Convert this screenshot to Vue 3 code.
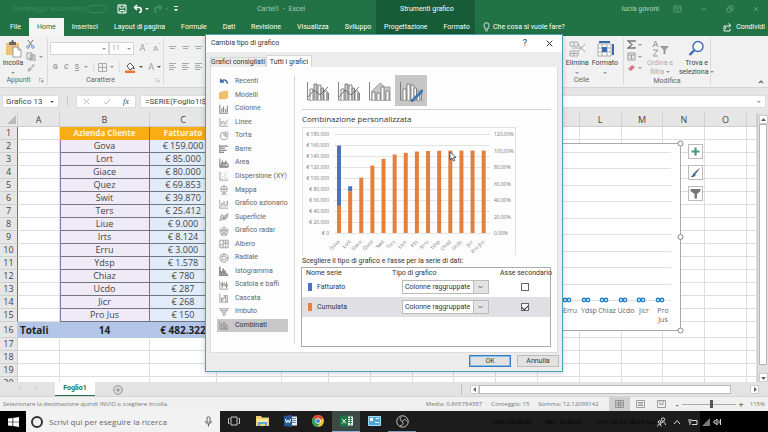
<script setup>
import { ref } from 'vue'

const tabs = ['File', 'Home', 'Inserisci', 'Layout di pagina', 'Formule', 'Dati', 'Revisione', 'Visualizza', 'Sviluppo']
const letters = ['A', 'B', 'C', '', '', '', '', '', '', '', '', 'L', 'M', 'N', 'O', '']
const clients = [
  ['Gova', '159.000', 159000], ['Lort', '85.000', 85000], ['Giace', '80.000', 80000], ['Quez', '69.853', 69853],
  ['Swit', '39.870', 39870], ['Ters', '25.412', 25412], ['Liue', '9.000', 9000], ['Irts', '8.124', 8124],
  ['Erru', '3.000', 3000], ['Ydsp', '1.578', 1578], ['Chiaz', '780', 780], ['Ucdo', '287', 287],
  ['Jicr', '268', 268], ['Pro Jus', '150', 150]
]
const total = clients.reduce((s, c) => s + c[2], 0)
let run = 0
const bars = clients.map(([name, , value], i) => {
  run += value
  const orange = (run / total / 1.2) * 99
  const full = (value / 180000) * 99
  return { name, x: 36 + i * 11.13, full, blue: Math.max(0, full - orange), orange }
})
const leftAxis = ['180.000', '160.000', '140.000', '120.000', '100.000', '80.000', '60.000', '40.000', '20.000', '0']
const rightAxis = ['120,00%', '100,00%', '80,00%', '60,00%', '40,00%', '20,00%', '0,00%']

const kinds = [
  { name: 'Recenti', c: '#3b6cb0', w: 1.8, d: 'M2 2v4h4M2.500 5.500C5 2.500 10 3 10 8' },
  { name: 'Modelli', folder: true },
  { name: 'Colonne', d: 'M1 1v10h10M3.500 10V5M5.500 10V3M8 10V6M10 10V2', w: 1.3 },
  { name: 'Linee', d: 'M1 1v10h10M2 9l3-4 2 2 4-4M2 5l4 4 4-2' },
  { name: 'Torta', d: 'M6 1.500a4.500 4.500 0 1 0 4.500 4.500H6zM7.500 1v3.500H11A4 4 0 0 0 7.500 1z' },
  { name: 'Barre', d: 'M1 1v10M2 2.500h9M2 5h5M2 7.500h7M2 10h4', w: 1.5 },
  { name: 'Area', d: 'M1 1v10h10M2 10l2-6 2 4 2-4 3 4v2zM3.500 9l1-3M8 9V6', w: 1.3 },
  { name: 'Dispersione (XY)', d: 'M1 1v10h10M3 3h1M6 4h1M9 2h1M4 7h1M8 6h1M3 9h1M6 8h1M9 9h1' },
  { name: 'Mappa', d: 'M6 1a4 4 0 1 0 .1 8zM6 1a4 4 0 0 1 0 8M2 5h8M6 9v2M3 11h6' },
  { name: 'Grafico azionario', d: 'M1 1v10h10M3.500 9V5M6 9V3M8 9V6M10 9V2M2.500 6h2M5 4h2M9 5h2' },
  { name: 'Superficie', d: 'M1 10l2-7 3 2 5-3-2 6-3 1zM2 7l4 1 4-3M3 5l3 2 4-4M6 5v4' },
  { name: 'Grafico radar', d: 'M6 1l5 4-2 6H3L1 5zM6 3l1 3 3-1-3 2 1 3-2-2-2 2 1-3-3-2 3 1z' },
  { name: 'Albero', d: 'M1 1.500h10v9H1zM5 1.500v9M8 1.500v9M5 5h6M1 7h4' },
  { name: 'Radiale', d: 'M6 1a5 5 0 1 0 .1 10A5 5 0 0 0 6 1zM6 3.500a2.500 2.500 0 1 0 .1 5A2.500 2.500 0 0 0 6 3.500zM6 1v2.500M11 6H8.500M2.500 9.500l2-2M2 3l2 1.500' },
  { name: 'Istogramma', d: 'M1 1v10h10M3 10V6M5 10V3M7 10V5M9 10V8', w: 1.9 },
  { name: 'Scatola e baffi', d: 'M1 1v10h10M4 2v8M3 4h2v3H3zM9 2v8M8 5h2v3H8zM6.500 3v4' },
  { name: 'Cascata', d: 'M1 1v10h10M3 10V6h1.500v4M4.500 6H7V3H5.500M8 3h2v7H8z' },
  { name: 'Imbuto', d: 'M1 2h10l-1 2H2zM3 4l1 2h4l1-2M4.500 6l.5 4h2l.5-4' },
  { name: 'Combinati', d: 'M1 1v10h10M3 11V5h2v6M5 5V3h2v8M8 11V6h2v5' }
]
const series = ref([
  { name: 'Fatturato', color: '#4a72bd', secondary: false, type: 'Colonne raggruppate' },
  { name: 'Cumulata', color: '#ea8040', secondary: true, type: 'Colonne raggruppate' }
])
const query = ref('')
const nameBox = ref('Grafico 13')
const formula = ref('=SERIE(Foglio1!$C')
const markers = [['Erru', 18], ['Ydsp', 37], ['Chiaz', 55], ['Ucdo', 74], ['Jicr', 92], ['Pro', 111]]
const zoom = ref(55)
</script>

<template>
  <div class="app">
    <header class="head">
      <div class="title-left">
        <span class="autosave">Salvataggio automatico</span><i class="toggle"></i>
        <button class="ic" aria-label="Salva"><svg width="10" height="10" viewBox="0 0 10 10" fill="none" stroke="#fff"><path d="M1 1h8v8H1zM3 1v3h4V1M3 9V6.500h4V9" /></svg></button>
        <button class="ic undo" aria-label="Annulla azione"><svg width="16" height="10" viewBox="0 0 16 10" fill="none" stroke="#fff"><path stroke-width="1.500" d="M4 1L1.500 3.500 4 6M2 3.500h4c3 0 3 5 0 5" /><path fill="#fff" stroke="none" d="M12 4h4l-2 2z" /></svg></button>
        <button class="ic redo" aria-label="Ripeti"><svg width="16" height="10" viewBox="0 0 16 10" fill="none" stroke="#3f9264"><path stroke-width="1.500" d="M6 1l2.500 2.500L6 6M8 3.500H4c-3 0-3 5 0 5" /><path fill="#3f9264" stroke="none" d="M12 4h3l-1.500 2z" /></svg></button>
        <svg class="qat" width="6" height="8" viewBox="0 0 6 8" fill="#fff"><path d="M1 1h4v1H1zM1 4h4L3 6.500z" /></svg>
        <span class="doc">Cartel1&nbsp; - &nbsp;Excel</span>
      </div>
      <div class="context">
        <div class="ctx-title">Strumenti grafico</div>
        <nav class="tabs"><button>Progettazione</button><button>Formato</button></nav>
      </div>
      <div class="title-right">
        <span class="user">lucia govoni</span>
        <svg width="9" height="8" viewBox="0 0 9 8" class="w1"><path d="M1 1h7v6H1zM1 3h7M4.500 6V4" /></svg>
        <svg width="8" height="8" viewBox="0 0 8 8"><path d="M1 4h5" /></svg>
        <svg width="8" height="8" viewBox="0 0 8 8"><path d="M1 3h4v4H1zM3 3V1h4v4H5" /></svg>
        <svg width="8" height="8" viewBox="0 0 8 8"><path d="M2 2l4 4M6 2L2 6" /></svg>
      </div>
      <nav class="tabs main-tabs">
        <button v-for="t in tabs" :key="t" :class="{ on: t === 'Home' }">{{ t }}</button>
      </nav>
      <div class="tell">
        <svg width="7" height="10" viewBox="0 0 7 10" fill="none" stroke="#fff" stroke-width=".8"><path d="M2 7C2 5 1 5 1 3.200a2.500 2.500 0 0 1 5 0C6 5 5 5 5 7zM2.200 8.800h2.600" /></svg>
        <span>Che cosa si vuole fare?</span>
        <button class="share"><svg width="9" height="9" viewBox="0 0 9 9" fill="none" stroke="#fff" stroke-width=".9"><path d="M3 3H1v5h6V6M2.500 6c0-3 2-3.500 4-3.500M5.500.5l2.500 2-2.500 2" /></svg>Condividi</button>
      </div>
    </header>

    <section class="ribbon">
      <div class="group clip">
        <div class="body">
          <button class="big">
            <svg width="17" height="18" viewBox="0 0 17 18"><path fill="#eec27a" d="M1 3h13v12H1z" /><path fill="#666" d="M4 2h2l1-2h1l1 2h2v3H4z" /><path fill="#fff" stroke="#888" stroke-width=".8" d="M8 7h5l3 3v7H8z" /><path d="M13 7v3h3" fill="none" stroke="#888" stroke-width=".8" /></svg>
            <span>Incolla</span><i class="car"></i>
          </button>
          <div class="mini">
            <svg width="10" height="9" viewBox="0 0 10 9" fill="none" stroke="#777"><path d="M2 0l4 6M7 0L3 6" /><circle cx="2" cy="7" r="1.300" stroke="#7b9ac4" /><circle cx="7" cy="7" r="1.300" stroke="#7b9ac4" /></svg>
            <span class="row"><svg width="10" height="9" viewBox="0 0 10 9" fill="#f4f4f4" stroke="#999"><path d="M1 1h5v6H1zM4 3h5v6H4zM5 5h3M5 7h3" /></svg><i class="car"></i></span>
            <svg width="10" height="8" viewBox="0 0 10 8" fill="#b5b5b5"><path d="M7 0l2 1-3 3-1-1zM4 3l2 2-3 3-2-2z" /></svg>
          </div>
        </div>
        <div class="cap">Appunti<svg width="5" height="5" viewBox="0 0 5 5" class="launch"><path d="M0 4V0h4M2 2l2 2M4 2v2H2" /></svg></div>
      </div>
      <div class="group font">
        <div class="body col">
          <div class="row fonts"><span class="box fam"><i class="car"></i></span><span class="box size">11<i class="car"></i></span><span class="gl">A<sup>ˆ</sup></span><span class="gl sm">A<sup>ˇ</sup></span></div>
          <div class="row styles"><b>G</b><b><em>C</em></b><b><u>S</u></b><i class="car"></i><i class="bar"></i>
            <svg width="9" height="9" viewBox="0 0 9 9" fill="none" stroke="#aaa"><path d="M.5.5h8v8h-8zM4.500.5v8M.5 4.500h8" /></svg><i class="car"></i><i class="bar"></i>
            <svg width="11" height="11" viewBox="0 0 11 11"><path fill="#fff" stroke="#555" d="M2 4l3-3 4 4-4 3z" /><path fill="#555" d="M8 4l2 3H8z" /><path fill="#e8792f" d="M0 8.500h10V11H0z" /></svg><i class="car dk"></i><span class="gl fc">A</span><i class="car dk"></i></div>
        </div>
        <div class="cap">Carattere<svg width="5" height="5" viewBox="0 0 5 5" class="launch dim"><path d="M0 4V0h4M2 2l2 2M4 2v2H2" /></svg></div>
      </div>
      <div class="align">
        <svg v-for="n in 6" :key="n" width="9" height="8" viewBox="0 0 9 8" stroke="#aaa" fill="none"><path :d="n < 4 ? 'M1 2.500h7M2 4.500h5' : 'M1 1.500h7M1 3.500h5M1 5.500h7M1 7.500h5'" /></svg>
      </div>
      <div class="group cells">
        <div class="body">
          <button class="big"><svg width="17" height="18" viewBox="0 0 17 18" fill="none" stroke="#aaa"><path d="M1 2h8v4H1zM5 2v4M3 8h10M1 11h8v5H1zM5 11v5M1 13.500h8M9 4l7 8M16 4l-7 8" /></svg><span>Elimina</span><i class="car"></i></button>
          <button class="big"><svg width="18" height="18" viewBox="0 0 18 18" fill="none" stroke="#aaa"><path fill="#fff" d="M2 4h13v12H2zM2 8h13M2 12h13M6 4v12M11 4v12" /><path fill="#386ab4" stroke="none" d="M6 7h5v5H6zM3 1h11v2H3zM16 4h2v11h-2z" /></svg><span>Formato</span><i class="car"></i></button>
        </div>
        <div class="cap">Celle</div>
      </div>
      <div class="group edit">
        <div class="body">
          <div class="mini m2">
            <span class="row"><svg width="9" height="9" viewBox="0 0 9 9" fill="none" stroke="#777" stroke-width="1.300"><path d="M8 2V1H1l4 3.500L1 8h7V7" /></svg><i class="car"></i></span>
            <span class="row"><svg width="9" height="9" viewBox="0 0 9 9" fill="none" stroke="#999"><path d="M1 1h7v7H1zM1 3h7M4.500 3v4M3 5.500L4.500 7 6 5.500" /></svg><i class="car"></i></span>
            <span class="row"><svg width="9" height="8" viewBox="0 0 9 8" fill="#e2748a"><path d="M5 1l3 2-4 4-3-2z" /></svg><i class="car"></i></span>
          </div>
          <button class="big dimt"><svg width="18" height="17" viewBox="0 0 18 17" fill="none" stroke="#999"><path d="M2 7l2.500-6L7 7M3 5h3M2 10h5l-5 6h5" /><path fill="#999" stroke="none" d="M9 6h9l-3.500 4v4h-2v-4z" /></svg><span>Ordina e</span><span>filtra <i class="car in"></i></span></button>
          <button class="big"><svg width="17" height="17" viewBox="0 0 17 17" fill="none" stroke="#3b6cb0"><circle cx="10" cy="6.500" r="5" stroke-width="1.400" fill="#fafcff" /><path stroke-width="2.400" d="M6 10.500L1.500 15" /></svg><span>Trova e</span><span>seleziona <i class="car in"></i></span></button>
        </div>
        <div class="cap">Modifica</div>
      </div>
      <div class="collapse"><svg width="6" height="4" viewBox="0 0 6 4" fill="none" stroke="#666" stroke-width="1.200"><path d="M1 3l2-2 2 2" /></svg></div>
    </section>

    <section class="fbar">
      <label class="namebox"><input v-model="nameBox" aria-label="Casella nome" /><i class="car dk"></i></label>
      <i class="dots"></i>
      <div class="fx"><svg width="7" height="7" viewBox="0 0 7 7"><path d="M1 1l5 5M6 1L1 6" /></svg><svg width="8" height="7" viewBox="0 0 8 7"><path d="M1 4l2 2 4-5" /></svg><em>fx</em></div>
      <label class="formula"><input v-model="formula" aria-label="Barra della formula" /><i class="car"></i></label>
    </section>

    <main class="work">
      <div class="sheet">
        <table class="grid">
          <colgroup><col class="c0" /><col class="cA" /><col class="cB" /><col class="cC" /><col class="cD" /><col class="cE" /><col v-for="n in 10" :key="n" /><col class="cZ" /></colgroup>
          <thead><tr><th class="corner"><svg width="9" height="9" viewBox="0 0 9 9"><path fill="#bbb" d="M9 0v9H0z" /></svg></th><th v-for="(l, i) in letters" :key="i">{{ l }}</th></tr></thead>
          <tbody>
            <tr class="titles"><th class="sel">1</th><td></td><td class="hd">Azienda Cliente</td><td class="hd">Fatturato</td><td v-for="n in 13" :key="n"></td></tr>
            <tr v-for="(c, i) in clients" :key="c[0]"><th class="sel">{{ i + 2 }}</th><td></td><td class="b">{{ c[0] }}</td><td class="c">€ {{ c[1] }}</td><td v-for="n in 13" :key="n"></td></tr>
            <tr class="tot"><th>16</th><td class="t lf">Totali</td><td class="t">14</td><td class="t">€ 482.322</td><td v-for="n in 13" :key="n"></td></tr>
            <tr v-for="r in 4" :key="r"><th>{{ r + 16 }}</th><td v-for="n in 16" :key="n"></td></tr>
          </tbody>
        </table>
        <div class="plot">
          <svg width="133" height="196" viewBox="0 0 133 196">
            <path fill="#fff" stroke="#aaa" d="M0 4.500h128.500v187H0" />
            <path stroke="#e0e0e0" d="M0 13.500h119M0 29.500h119M0 46.500h119M0 62.500h119M0 79.500h119M0 95.500h119M0 112.500h119M0 128.500h119M0 145.500h119M0 161.500h119" />
            <g v-for="m in markers" :key="m[0]">
              <g fill="#b4dcf8" stroke="#1c7cc8" stroke-width="1.200"><circle :cx="m[1] - 5" cy="161" r="1.800" /><circle :cx="m[1] - 1" cy="161" r="1.800" /></g>
              <text :x="m[1]" y="174" text-anchor="middle">{{ m[0] }}</text>
            </g>
            <text x="111" y="183" text-anchor="middle">Jus</text>
            <g fill="#fff" stroke="#888"><circle cx="128.500" cy="4.500" r="2.500" /><circle cx="128.500" cy="98" r="2.500" /><circle cx="128.500" cy="191.500" r="2.500" /></g>
          </svg>
          <div class="side">
            <button aria-label="Elementi grafico"><svg width="11" height="11" viewBox="0 0 11 11"><path stroke="#4a9a74" stroke-width="2.200" d="M5.500 1.500v8M1.500 5.500h8" /></svg></button>
            <button aria-label="Stili grafico"><svg width="11" height="11" viewBox="0 0 11 11"><path fill="#555" d="M10.500 0.500l-4.500 6-1.500-1.200z" /><path fill="#3b6cb0" d="M4.500 5.500L6 7c-1 3-3 3.500-5.500 3C3 9 2.500 6.500 4.500 5.500z" /></svg></button>
            <button aria-label="Filtri grafico"><svg width="11" height="11" viewBox="0 0 11 11"><path fill="#777" d="M.5 1h10v2L7 6v4.500H4.500V6L.5 3z" /></svg></button>
          </div>
        </div>
      </div>
      <div class="vscroll"><button aria-label="Su"><svg width="5" height="4" viewBox="0 0 5 4"><path d="M0 3h5L2.500 0z" /></svg></button><i></i><button aria-label="Giù"><svg width="5" height="4" viewBox="0 0 5 4"><path d="M0 1h5L2.500 4z" /></svg></button></div>
    </main>

    <section class="sheets">
      <span class="nav"><i>‹</i><i>›</i></span>
      <button class="sheet-tab">Foglio1</button>
      <button class="add" aria-label="Nuovo foglio"><svg width="10" height="10" viewBox="0 0 10 10" fill="none" stroke="#777" stroke-width=".8"><circle cx="5" cy="5" r="4.300" /><path d="M5 2.500v5M2.500 5h5" /></svg></button>
      <div class="hscroll"><button aria-label="Sinistra"><svg width="4" height="5" viewBox="0 0 4 5"><path d="M3 0v5L0 2.500z" /></svg></button><i></i><span></span><button aria-label="Destra"><svg width="4" height="5" viewBox="0 0 4 5"><path d="M1 0v5l3-2.500z" /></svg></button></div>
    </section>

    <section class="status">
      <span class="msg">Selezionare la destinazione quindi INVIO o scegliere Incolla.</span>
      <div class="sums"><span>Media: 0,865784387</span><span>Conteggio: 15</span><span>Somma: 12,12098142</span></div>
      <div class="views">
        <button class="view on" aria-label="Normale"><svg width="9" height="8" viewBox="0 0 9 8"><path d="M.5.5h8v7h-8zM3.500.5v7M5.500.5v7M.5 3h8M.5 5h8" /></svg></button>
        <button class="view" aria-label="Layout"><svg width="9" height="8" viewBox="0 0 9 8"><path d="M.5.5h8v7h-8zM2 2.500h5M2 4h5M2 5.500h5" /></svg></button>
        <button class="view" aria-label="Anteprima"><svg width="9" height="8" viewBox="0 0 9 8"><path d="M.5.5h8v7h-8zM3 .5v4h3v-4" /></svg></button>
      </div>
      <div class="zoomer"><b>-</b><input v-model="zoom" type="range" class="zoom" aria-label="Zoom" /><b>+</b></div>
      <span class="pct">115%</span>
    </section>

    <footer class="taskbar">
      <button class="start" aria-label="Start"><svg width="11" height="10" viewBox="0 0 11 10" fill="#fff"><path d="M0 1.500L4.500 1v3.700H0zM5.200.9L11 0v4.700H5.200zM0 5.300h4.500V9L0 8.500zM5.200 5.300H11V10l-5.800-.9z" /></svg></button>
      <label class="search"><i class="ring"></i><input v-model="query" placeholder="Scrivi qui per eseguire la ricerca" aria-label="Cerca" />
        <svg width="7" height="11" viewBox="0 0 7 11" fill="none" stroke="#555" stroke-width=".9"><rect x="2" y=".7" width="3" height="6" rx="1.500" /><path d="M.6 5c0 4 5.800 4 5.800 0M3.500 8v2.500" /></svg></label>
      <nav class="apps">
        <button aria-label="Visualizzazione attività"><svg width="12" height="10" viewBox="0 0 12 10" fill="none" stroke="#ddd" stroke-width=".9"><path d="M3 1h6v8H3zM1.500 2.500h-1v5h1M10.500 2.500h1v5h-1" /></svg></button>
        <button aria-label="Esplora file"><svg width="13" height="12" viewBox="0 0 13 12"><path fill="#f2cf70" d="M0 1h5l1 1.500h7V11H0z" /><path fill="#fbe7a4" d="M1 4h11v3H1z" /><path fill="#5aa9dc" d="M2 7h9v4H9V9H4v2H2z" /></svg></button>
        <button aria-label="Word"><svg width="13" height="12" viewBox="0 0 13 12"><path fill="#e8eef8" d="M6 1.500h7v9H6z" /><path stroke="#2b5797" stroke-width=".7" d="M8 3.500h4M8 5.500h4M8 7.500h4" /><path fill="#2b5797" d="M0 1l8-1v12l-8-1z" /><path fill="none" stroke="#fff" d="M1.500 4l1 4L4 5l1.500 3 1-4" /></svg></button>
        <button aria-label="Chrome"><svg width="12" height="12" viewBox="0 0 12 12"><circle cx="6" cy="6" r="6" fill="#f0c233" /><path fill="#dc4a38" d="M6 6L.8 3A6 6 0 0 1 11.200 3z" /><path fill="#2ca05a" d="M6 6L.8 3A6 6 0 0 0 5.500 12l2-4z" /><circle cx="6" cy="6" r="2.700" fill="#fff" /><circle cx="6" cy="6" r="2.100" fill="#4a80d8" /></svg></button>
        <button class="open" aria-label="Excel"><svg width="13" height="12" viewBox="0 0 13 12"><path fill="#e8f4ec" d="M6 1.500h7v9H6z" /><path stroke="#1f7246" stroke-width=".8" d="M8 3.500h4M8 5.500h4M8 7.500h4M10.500 2v8" /><path fill="#1f7246" d="M0 1l8-1v12l-8-1z" /><path stroke="#fff" d="M2 4l4 4.500M6 4L2 8.500" /></svg></button>
        <button aria-label="Pannello"><svg width="13" height="10" viewBox="0 0 13 10"><path fill="#4aa8e0" stroke="#a8dcf8" d="M.5.5h12v9H.5z" /><path fill="#fff" d="M2 2h3v3H2zM7 6h4v1H7zM8 2h3v1H8z" /></svg></button>
        <button class="run" aria-label="OBS"><svg width="13" height="13" viewBox="0 0 13 13" fill="none" stroke="#ccc"><circle cx="6.500" cy="6.500" r="5.700" /><path d="M6.500 6.500C4 6 3.500 3.500 5.500 2M6.500 6.500c1-2.500 3.500-2.500 4.500 0M6.500 6.500c1.500 2 0 4.500-2.500 4" /></svg></button>
      </nav>
      <div class="rec"><span>LIVE: 00:00:00</span><span>REC: 00:00:21</span><span>CPU: 26.2%, 30.00 fps</span></div>
      <div class="tray">
        <svg width="9" height="10" viewBox="0 0 9 10"><circle cx="6" cy="2.500" r="1.700" /><path d="M3.500 8c0-4 5-4 5 0" /><circle cx="2.500" cy="5" r="1.300" /><path d="M.5 9.500c0-3 3.500-3 3.500 0" /></svg>
        <svg width="8" height="6" viewBox="0 0 8 6"><path d="M1 5l3-3.500L7 5" /></svg>
        <svg width="10" height="8" viewBox="0 0 10 8"><path d="M4 2.500h5v4H4M1 1v2c0 2 2 2 2 0V1M2 4.500V7" /></svg>
      </div>
      <div class="tray late">
        <svg width="8" height="8" viewBox="0 0 8 8"><path fill="#777" stroke="none" d="M8 0v8H0z" /></svg>
        <svg width="9" height="8" viewBox="0 0 9 8"><path d="M1 3h1.500L4 1v6L2.500 5H1zM6 2.500v3M7.500 1v6" /></svg>
      </div>
    </footer>

    <div class="dialog" role="dialog" aria-label="Cambia tipo di grafico">
      <div class="dtitle"><span>Cambia tipo di grafico</span><button aria-label="Guida">?</button><button aria-label="Chiudi"><svg width="7" height="7" viewBox="0 0 7 7" stroke="#333"><path d="M.7.7l5.600 5.600M6.300.7L.7 6.300" /></svg></button></div>
      <div class="dtabs"><button>Grafici consigliati</button><button class="on">Tutti i grafici</button></div>
      <div class="panel">
        <ul class="kinds">
          <li v-for="k in kinds" :key="k.name" :class="{ on: k.name === 'Combinati' }">
            <svg width="10" height="10" viewBox="0 0 12 12" fill="none"><path v-if="k.folder" fill="#eebf6c" d="M0 3l7-2h4v9l-4 1H0z" /><path v-else :d="k.d" :stroke="k.c || '#888'" :stroke-width="k.w || 0.9" /></svg>{{ k.name }}
          </li>
        </ul>
        <div class="detail">
          <div class="thumbs">
            <button v-for="n in 4" :key="n" :class="{ on: n === 4 }" :aria-label="'Combinazione ' + n">
              <svg width="24" height="22" viewBox="0 0 24 22" fill="none" stroke="#777" stroke-width=".9">
                <path d="M1.500 2v18H23" />
                <path v-if="n === 3" fill="#c8c8c8" stroke="#999" d="M4 20v-9l8-8 5 4h5v13z" />
                <path fill="#fff" :d="n === 3 ? 'M4 20v-8h3v8M9 20v-7h3v7M13 20V7h3v13M18 20v-9h3v9' : 'M4 20V9h3v11M12 20V5h3v15M18 20v-9h3v9'" />
                <path v-if="n !== 3" :fill="n === 4 ? '#fff' : '#c8c8c8'" d="M8 20V4h3v16M15 20V8h2.500v12M21 20v-7h1.500v7" />
                <path v-if="n < 3" stroke="#666" d="M2 17l6-7 6 5 8-8" />
                <g v-if="n === 4" stroke="none"><path fill="#3f74b8" d="M23 9l2 2-9.500 9.500-2-2z" /><path fill="#2b5797" d="M13 18.500l2.500 2.500-4 1z" /></g>
              </svg>
            </button>
          </div>
          <h2>Combinazione personalizzata</h2>
          <div class="chart">
            <svg width="213" height="127" viewBox="0 0 213 127">
              <path d="M31 6.500h156M31 17.500h156M31 28.500h156M31 39.500h156M31 50.500h156M31 61.500h156M31 72.500h156M31 83.500h156M31 94.500h156M31 105.500h156" stroke="#e3e3e3" />
              <text v-for="(t, i) in leftAxis" :key="t" x="26" :y="8 + i * 11" text-anchor="end">€ {{ t }}</text>
              <text v-for="(t, i) in rightAxis" :key="t" x="191" :y="8 + i * 16.5">{{ t }}</text>
              <g v-for="b in bars" :key="b.name">
                <rect v-if="b.blue" :x="b.x - 2" :y="105 - b.full" width="4" :height="b.blue" fill="#4a72bd" />
                <rect :x="b.x - 2" :y="105 - b.orange" width="4" :height="b.orange" fill="#e4803f" />
                <text :transform="`translate(${b.x + 1} 114) rotate(-45)`" text-anchor="end">{{ b.name }}</text>
              </g>
            </svg>
          </div>
          <p>Scegliere il tipo di grafico e l'asse per la serie di dati:</p>
          <div class="series">
            <table>
              <thead><tr><th class="n">Nome serie</th><th class="k">Tipo di grafico</th><th class="s">Asse secondario</th></tr></thead>
              <tbody>
                <tr v-for="(s, i) in series" :key="s.name" :class="{ on: i === 1 }">
                  <td><i class="sw" :style="{ background: s.color }"></i>{{ s.name }}</td>
                  <td><span class="pick"><select v-model="s.type" :aria-label="'Tipo di grafico ' + s.name"><option>Colonne raggruppate</option></select><svg width="15" height="12" viewBox="0 0 15 12"><path fill="#e2e2e2" stroke="#bbb" d="M.5 -1H16v14H.5z" /><path fill="none" stroke="#666" d="M5.500 5l2 2 2-2" /></svg></span></td>
                  <td class="chk"><input v-model="s.secondary" type="checkbox" :aria-label="'Asse secondario ' + s.name" /></td>
                </tr>
              </tbody>
            </table>
          </div>
        </div>
      </div>
      <div class="dfoot"><button class="ok">OK</button><button>Annulla</button></div>
      <svg class="cursor" width="8" height="11" viewBox="0 0 8 11"><path fill="#fff" stroke="#333" stroke-width=".8" d="M1 .8v8l2-1.800 1.300 3 1.400-.6L4.500 6.500H7z" /></svg>
    </div>
  </div>
</template>

<style>
html, body { height: 100%; margin: 0; overflow: hidden; }
</style>
<style scoped>
.app { display: flex; flex-direction: column; height: 100vh; position: relative; font: 7px/9px Roboto, "Noto Sans", sans-serif; color: #444; background: #e6e6e6; overflow: hidden; }
.app * { box-sizing: border-box; }
svg { display: block; flex: none; }
button, input, select { font: inherit; color: inherit; border: 0; background: none; padding: 0; margin: 0; }
i { font-style: normal; }
.row { display: flex; align-items: center; }
.car { width: 0; height: 0; flex: none; border: 2px solid transparent; border-top-color: #999; border-bottom: 0; }
.car.dk { border-top-color: #555; }
.car.in { display: inline-block; vertical-align: middle; }

.head { display: grid; grid-template: 18px 18px / 376px 99px 1fr; background: #217346; color: #fff; }
.title-left { display: flex; align-items: center; padding-left: 12px; }
.autosave { color: #358a5b; width: 75px; white-space: nowrap; }
.toggle { width: 20px; height: 8px; border: 1px solid #358a5b; border-radius: 4px; margin-right: 10px; }
.undo { margin-left: 6px; }
.redo { margin-left: 4px; }
.qat { margin-left: 4px; }
.doc { margin-left: 78px; color: #a5c9b5; white-space: nowrap; }
.context { grid-row: 1 / 3; grid-column: 2; background: #185c37; display: grid; grid-template-rows: 18px 18px; }
.ctx-title { display: flex; align-items: center; justify-content: center; }
.title-right { grid-column: 3; grid-row: 1; display: flex; align-items: center; justify-content: flex-end; gap: 18px; padding-right: 8px; color: #b5d3c2; }
.title-right svg { fill: none; stroke: #5c9f7b; stroke-width: .9; }
.title-right .user { margin-right: -4px; }
.main-tabs { grid-row: 2; grid-column: 1; padding-left: 2px; }
.tabs { display: flex; white-space: nowrap; }
.tabs button { padding: 0 8px; height: 18px; }
.tabs .on { background: #f5f5f5; color: #217346; }
.tell { grid-row: 2; grid-column: 3; display: flex; align-items: center; gap: 3px; padding: 0 3px 0 8px; }
.share { margin-left: auto; display: flex; gap: 4px; align-items: center; }

.ribbon { display: flex; height: 52px; background: #f1f1f1; border-bottom: 1px solid #d5d5d5; flex: none; }
.group { display: flex; flex-direction: column; border-right: 1px solid #dadada; margin: 2px 0; }
.body { display: flex; flex: 1; }
.cap { display: flex; justify-content: center; align-items: center; height: 9px; color: #666; position: relative; }
.launch { position: absolute; right: 3px; fill: none; stroke: #888; stroke-width: .8; }
.dim { opacity: .5; }
.big { display: flex; flex-direction: column; align-items: center; white-space: nowrap; padding-top: 2px; }
.big svg { margin-bottom: 1px; }
.big .car { margin-top: 4px; }
.big .car.in { margin: 0; }
.clip { width: 48px; }
.clip .big { width: 26px; }
.clip .cap { padding-right: 10px; }
.mini { display: flex; flex-direction: column; gap: 3px; padding-top: 2px; }
.mini .row { gap: 3px; }
.font { width: 116px; }
.font .cap { padding-right: 10px; }
.col { flex-direction: column; padding: 4px 2px 0; gap: 6px; }
.box { display: flex; align-items: center; justify-content: flex-end; height: 13px; border: 1px solid #d5d5d5; background: #fdfdfd; padding: 0 2px; color: #aaa; }
.fam { width: 61px; }
.size { width: 26px; justify-content: space-between; }
.gl { font-size: 9px; margin-left: 5px; color: #999; }
.gl.fc { margin: 0; }
.gl sup { font-size: 6px; line-height: 0; }
.sm { font-size: 8px; }
.styles { gap: 5px; padding-left: 3px; height: 12px; color: #999; }
.styles b { width: 8px; }
.styles .car { margin-left: -2px; }
.bar { width: 1px; height: 10px; background: #ddd; }
.align { display: grid; grid-template-columns: repeat(3, 13px); grid-template-rows: 18px 18px; padding: 8px 0 0 4px; }
.cells { margin-left: auto; width: 60px; }
.cells .body { justify-content: flex-end; gap: 3px; padding-right: 5px; }
.cells .cap { padding-right: 24px; }
.edit { width: 87px; }
.edit .body { gap: 6px; padding-left: 3px; }
.edit .big svg { margin-bottom: 2px; }
.m2 { width: 14px; }
.m2 .row { gap: 2px; }
.dimt { color: #aaa; }
.collapse { width: 57px; display: flex; justify-content: flex-end; align-items: flex-end; padding: 0 4px 3px 0; }

.fbar { display: flex; height: 25px; padding: 7px 2px 5px; flex: none; background: #e6e6e6; font-size: 8px; }
.namebox, .fx, .formula { background: #fff; border: 1px solid #dcdcdc; display: flex; align-items: center; height: 13px; }
.namebox { width: 57px; padding: 0 4px 0 3px; }
.namebox input, .formula input { flex: 1; min-width: 0; }
.dots { width: 1px; height: 9px; margin: 2px 8px; border-left: 1px dotted #aaa; }
.fx { width: 60px; justify-content: space-around; margin-right: 4px; font-family: "Liberation Serif", serif; }
.fx svg { fill: none; stroke: #bbb; }
.formula { flex: 1; padding: 0 4px; }

.work { flex: 1; display: flex; min-height: 0; }
.sheet { flex: 1; position: relative; overflow: hidden; background: #fff; }
.grid { table-layout: fixed; width: 100%; border-spacing: 0; font: 9px/10px "Open Sans", "Noto Sans", sans-serif; }
.grid th, .grid td { height: 13px; padding: 0; text-align: center; white-space: nowrap; overflow: hidden; border-right: 1px solid #dedede; border-bottom: 1px solid #dedede; }
.grid th { background: #e6e6e6; font-weight: 400; border-color: #cfcfcf; }
.grid thead th { height: 14px; }
.grid .corner svg { margin-left: 7px; }
.grid th.sel { border-right: 1px solid #3f8f5f; }
.c0 { width: 18px; } .cA { width: 42px; } .cB { width: 90px; } .cC { width: 67px; } .cD { width: 65px; } .cE { width: 47px; } .cZ { width: 10px; }
.grid .hd { background: #f8ad14; color: #fff3d6; font-weight: 700; font-size: 8px; border-color: #8b5a9b; border-bottom-color: #f8ad14; }
.grid .b { background: #eeebf6; border-right-color: #5a78c8; border-bottom-color: #77727f; box-shadow: inset 1px 0 #9275b5; }
.grid .c { background: #e1ecf8; border-bottom-color: #6c7886; }
.grid .tot th, .grid .tot td { height: 16px; }
.grid .t { background: #b4c6e7; font-weight: 700; font-size: 10px; color: #222; border-color: #b4c6e7; }
.grid .lf { text-align: left; padding-left: 2px; }
.plot { position: absolute; right: 54px; top: 26px; display: flex; gap: 3px; margin: 0; }
.plot text { font: 7px "Open Sans", "Noto Sans", sans-serif; fill: #666; }
.side { display: flex; flex-direction: column; gap: 6px; padding-top: 5px; }
.side button { width: 15px; height: 15px; border: 1px solid #bbb; background: #fff; display: grid; place-items: center; }
.vscroll { width: 11px; background: #e0e0e0; display: flex; flex-direction: column; padding: 2px 1px 0; border-left: 1px solid #ccc; }
.vscroll button, .hscroll button { width: 9px; height: 9px; background: #fff; border: 1px solid #ccc; display: grid; place-items: center; flex: none; }
.vscroll svg, .hscroll svg { fill: #666; }
.vscroll i { flex: 1; background: #fff; border: 1px solid #b5b5b5; margin-bottom: 8px; }

.sheets { height: 14px; display: flex; flex: none; background: #e3e3e3; }
.nav { width: 55px; display: flex; justify-content: center; gap: 14px; color: #aaa; line-height: 13px; }
.sheet-tab { width: 40px; background: #fff; color: #217346; font-weight: 700; border-bottom: 1px solid #217346; }
.add { margin: 1px 0 0 18px; display: flex; align-items: center; }
.hscroll { margin: 3px 9px 1px auto; width: 298px; display: flex; padding-left: 8px; border-left: 1px solid #bbb; }
.hscroll i { flex: 1; background: #fff; border: 1px solid #bbb; height: 9px; }
.hscroll span { width: 19px; }
.status { height: 15px; flex: none; display: flex; align-items: center; background: #f0f0f0; border-top: 1px solid #d5d5d5; padding: 0 3px; font: 6px/9px "Open Sans", "Noto Sans", sans-serif; color: #777; white-space: nowrap; }
.msg { margin-right: auto; }
.sums { display: flex; gap: 9px; margin-right: 10px; }
.views { display: flex; }
.view { width: 21px; height: 14px; display: grid; place-items: center; }
.view svg { fill: none; stroke: #888; stroke-width: .8; }
.view.on { background: #cfcfcf; }
.zoomer { display: flex; align-items: center; gap: 3px; margin: 0 6px 0 4px; }
.zoomer b { font-size: 9px; }
.zoom { appearance: none; width: 54px; height: 9px; background: linear-gradient(#aaa, #aaa) center / 100% 1px no-repeat; }
.zoom::-webkit-slider-thumb { appearance: none; width: 3px; height: 8px; background: #555; }

.taskbar { height: 21px; flex: none; display: flex; background: #1c1c1c; color: #fff; }
.start { width: 26px; background: #000; display: grid; place-items: center; }
.search { width: 194px; background: #f2f2f2; display: flex; align-items: center; gap: 6px; padding: 0 8px 0 5px; color: #555; font: 8px/10px "Open Sans", "Noto Sans", sans-serif; }
.search input { flex: 1; min-width: 0; }
.search input::placeholder { color: #666; opacity: 1; }
.ring { width: 12px; height: 12px; border: 2px solid #333; border-radius: 50%; }
.apps { display: flex; }
.apps button { width: 28px; display: grid; place-items: center; border-bottom: 1px solid transparent; }
.apps .open { background: #3d4a43; border-color: #8cb4d8; }
.apps .run { border-color: #7c9cba; }
.rec { flex: 1; display: flex; align-items: center; justify-content: flex-end; gap: 14px; color: #050505; font-size: 6px; white-space: nowrap; }
.tray { display: flex; align-items: center; gap: 7px; padding: 0 2px; }
.tray svg { fill: none; stroke: #ddd; stroke-width: 1; }
.late { background: #000; width: 68px; gap: 3px; }

.dialog { position: absolute; left: 205px; top: 34px; width: 358px; height: 338px; border: 1px solid #4ba3b8; background: #ececec; color: #333; display: flex; flex-direction: column; box-shadow: 0 1px 5px #0003; }
.dtitle { height: 17px; background: #fff; display: flex; align-items: center; padding: 0 9px 0 5px; }
.dtitle span { margin-right: auto; }
.dtitle button { margin-left: 19px; font-size: 9px; }
.dtabs { display: flex; align-items: flex-end; height: 16px; padding: 0 4px; margin-bottom: -1px; }
.dtabs button { height: 11px; width: 56px; border: 1px solid #d5d5d5; white-space: nowrap; display: flex; align-items: center; justify-content: center; }
.dtabs .on { height: 13px; width: 46px; background: #fff; border-bottom: 0; }
.panel { flex: 1; min-height: 0; margin: 0 4px; background: #fdfdfd; border: 1px solid #ddd; border-top: 0; display: flex; }
.kinds { list-style: none; margin: 8px 0; padding: 0 6px 12px 6px; width: 84px; display: flex; flex-direction: column; border-right: 1px solid #d8d8d8; color: #666; }
.kinds li { flex: 1; display: flex; align-items: center; gap: 6px; padding-left: 2px; white-space: nowrap; }
.kinds .on { background: #c8c8c8; color: #333; }
.detail { flex: 1; padding: 8px 6px 0 7px; display: flex; flex-direction: column; min-width: 0; }
.thumbs { display: flex; height: 35px; border-bottom: 1px solid #d5d5d5; }
.thumbs button { width: 31px; height: 31px; display: grid; place-items: center; }
.thumbs .on { background: #c6c6c6; width: 32px; }
h2 { font: 400 8px/12px "Open Sans", "Noto Sans", sans-serif; margin: 3px 0 2px; }
.chart { width: 214px; height: 128px; border: 1px solid #e2e2e2; border-bottom: 0; }
.chart text { font: 5px "Open Sans", "Noto Sans", sans-serif; fill: #777; }
p { margin: 2px 0 1px; }
.series { border: 1px solid #aaa; height: 80px; margin-left: -1px; background: #fff; }
.series table { width: 100%; border-spacing: 0; table-layout: fixed; }
.series th { height: 9px; line-height: 8px; font-weight: 400; text-align: left; padding: 0 0 0 4px; white-space: nowrap; }
.series th.k { padding: 0; }
.series th.s { padding: 0; text-align: right; }
.n { width: 90px; } .s { width: 50px; }
.series td { height: 20px; padding: 0; }
.series .on { background: #e0e0e4; }
.sw { display: inline-block; width: 4px; height: 8px; margin: 0 5px 0 6px; vertical-align: middle; }
.pick { display: flex; align-items: center; width: 87px; height: 14px; margin-left: 10px; border: 1px solid #bbb; background: #fff; }
.pick select { appearance: none; flex: 1; min-width: 0; padding-left: 2px; }
.chk { text-align: center; }
.chk input { appearance: none; width: 8px; height: 8px; border: 1px solid #666; background: #fff; display: inline-grid; place-items: center; vertical-align: middle; }
.chk input:checked::before { content: ""; width: 5px; height: 3px; border: solid #333; border-width: 0 0 1px 1px; transform: rotate(-45deg); }
.dfoot { height: 18px; display: flex; justify-content: flex-end; gap: 6px; padding: 2px 3px 4px; }
.dfoot button { width: 42px; background: #e2e2e2; border: 1px solid #bbb; }
.dfoot .ok { border-color: #2f7fc8; outline: 1px solid #8dbbe2; outline-offset: -2px; }
.cursor { position: absolute; left: 243px; top: 116px; }
</style>
